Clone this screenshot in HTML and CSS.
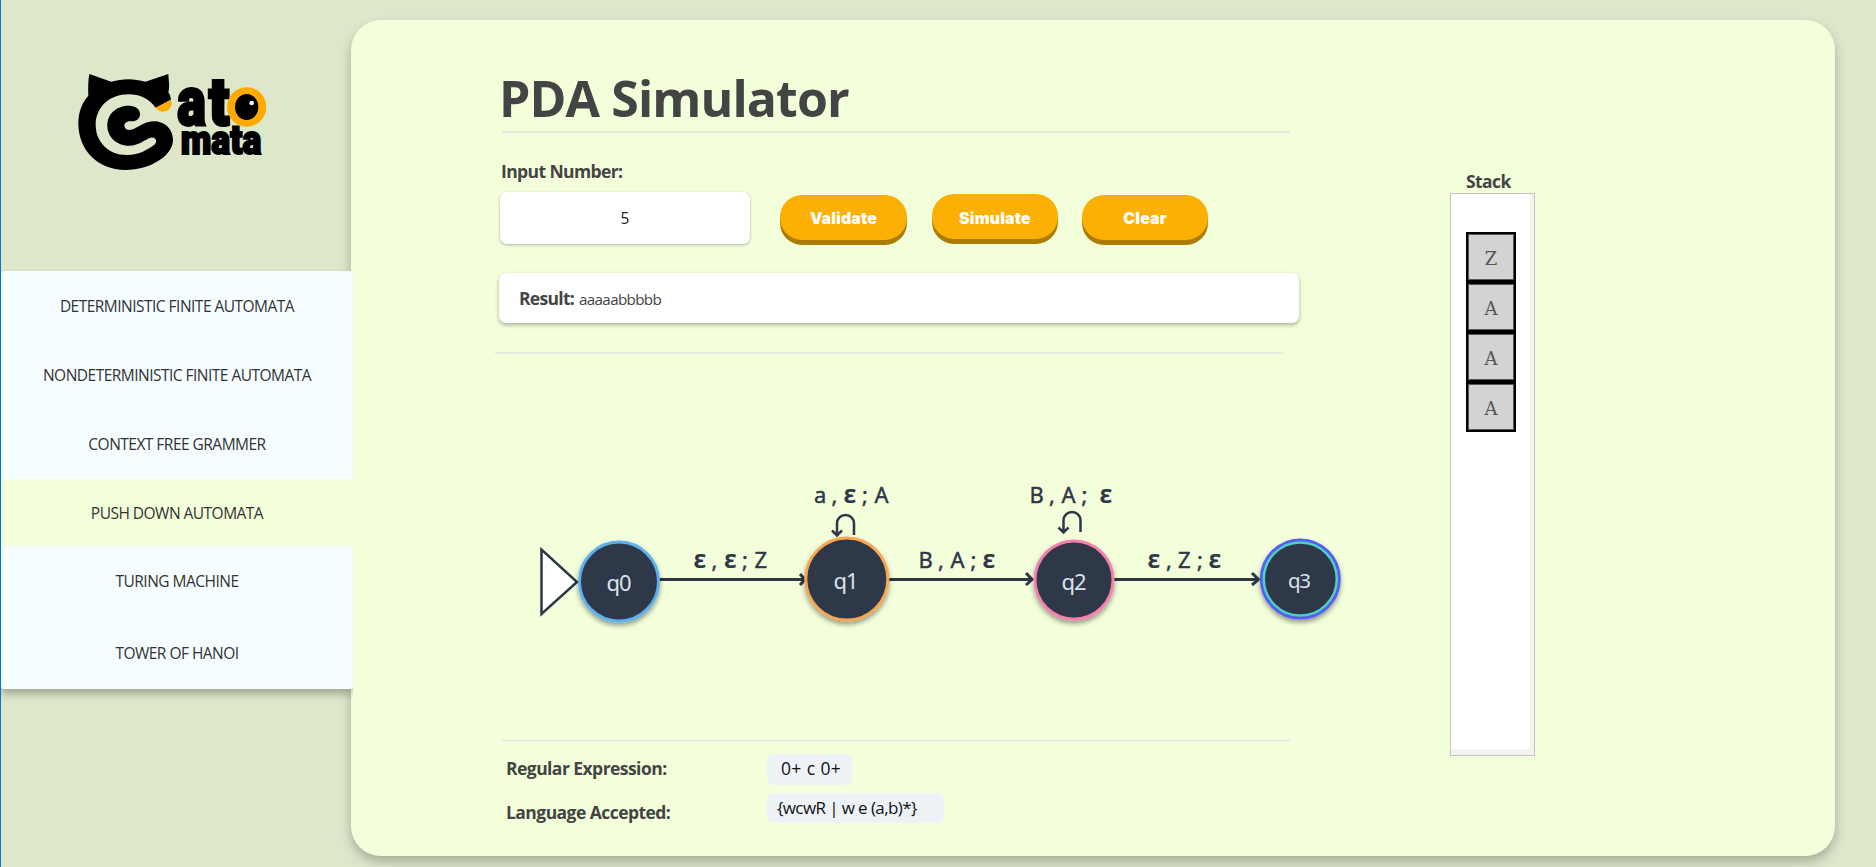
FILE: index.html
```html
<!DOCTYPE html>
<html lang="en">
<head>
<meta charset="utf-8">
<title>PDA Simulator</title>
<link rel="stylesheet" href="styles.css">
</head>
<body>
<aside class="sidebar">
  <svg class="logo" width="220" height="120" viewBox="0 0 660 360">
    <path d="M88 42L154 65C188 55 222 55 256 65L325 42C326 62 330 80 325 97C329 103 332 110 333 119L287 143C265 115 240 103 205 103C150 103 107 140 107 195C107 245 145 285 200 285C235 285 262 270 283 254C294 245 287 229 272 233C255 238 235 257 207 257C170 257 142 230 142 197C142 160 170 137 207 137C228 137 240 148 240 162C240 176 230 184 215 184C200 182 193 190 193 197C194 210 210 214 225 205C245 195 260 184 281 184C315 184 339 208 339 240C339 287 270 330 197 330C110 330 55 268 55 190C55 155 68 125 85 107Q83 70 88 42Z"/>
    <path d="M333 119A26 26 0 0 1 287 143Z" fill="#ffaa00"/>
    <text class="logo-text" x="352" y="196" font-size="206" textLength="86" lengthAdjust="spacingAndGlyphs">a</text>
    <text class="logo-text" x="446" y="196" font-size="198" textLength="62" lengthAdjust="spacingAndGlyphs">t</text>
    <text class="logo-text small" x="362" y="282" font-size="124" textLength="242" lengthAdjust="spacingAndGlyphs">mata</text>
    <circle cx="560" cy="141" r="59" fill="#ffaa00"/>
    <ellipse cx="560" cy="141" rx="35" ry="39"/>
    <circle cx="575" cy="129" r="7" fill="#fff"/>
  </svg>
  <nav class="menu">
    <a class="item first">DETERMINISTIC FINITE AUTOMATA</a>
    <a class="item second">NONDETERMINISTIC FINITE AUTOMATA</a>
    <a class="item third">CONTEXT FREE GRAMMER</a>
    <a class="item active">PUSH DOWN AUTOMATA</a>
    <a class="item fifth">TURING MACHINE</a>
    <a class="item last">TOWER OF HANOI</a>
  </nav>
</aside>
<main class="panel">
  <section class="work">
    <h1 class="title">PDA Simulator</h1>
    <div class="rule heading-rule"></div>
    <label class="label">Input Number:</label>
    <div class="controls">
      <div class="input">5</div>
      <button class="btn validate">Validate</button>
      <button class="btn simulate">Simulate</button>
      <button class="btn clear">Clear</button>
    </div>
    <div class="result"><b class="result-label">Result:</b><span class="result-text">aaaaabbbbb</span></div>
    <div class="rule result-rule"></div>
    <svg class="diagram" width="853" height="386" viewBox="495 354 853 386">
      <defs>
        <filter id="shadow" x="-20%" y="-20%" width="140%" height="150%">
          <feDropShadow dx="0" dy="3" stdDeviation="2.5" flood-color="#000" flood-opacity=".4"/>
        </filter>
      </defs>
      <path d="M541.5 549.5V614L577 582Z" class="start"/>
      <g class="edge">
        <path d="M659 579.5H803M800 574L805 579.5L800 585"/>
        <path d="M888 579.5H1031M1026 573L1032 579.5L1026 585"/>
        <path d="M1114 579.5H1258M1252 573L1258.500 579.500L1252 585"/>
        <path d="M854 535V523.500A8.500 8.500 0 0 0 837 523.500V535M832 530.500L837 535.500L842 530.500" class="loop"/>
        <path d="M1080.500 532V520.500A8.500 8.500 0 0 0 1063.500 520.500V532M1058.500 527.500L1063.500 532.500L1068.500 527.500" class="loop"/>
      </g>
      <g class="state" filter="url(#shadow)">
        <circle cx="619" cy="581.500" r="39.500" stroke="#5eb0ee"/>
        <circle cx="846.800" cy="579" r="41" stroke="#f6a750"/>
        <circle cx="1074" cy="580" r="39" stroke="#f680ac"/>
        <circle cx="1300.300" cy="579" r="39" stroke="#555df5"/>
      </g>
      <circle cx="1300.300" cy="579" r="36.500" fill="none" stroke="#4fd0c6" stroke-width="2.500"/>
      <g class="state-name">
        <text x="619" y="590.500" textLength="25">q0</text>
        <text x="846" y="588.500" textLength="25">q1</text>
        <text x="1074" y="589.500" textLength="25">q2</text>
        <text x="1299.500" y="587.500" textLength="23" class="last-state">q3</text>
      </g>
      <g class="edge-label">
        <text y="567.500"><tspan x="693.500" class="eps">ε</tspan><tspan x="711.500">,</tspan><tspan x="724" class="eps">ε</tspan><tspan x="742">;</tspan><tspan x="754.500">Z</tspan></text>
        <text y="502.500"><tspan x="814">a</tspan><tspan x="831.500">,</tspan><tspan x="843.500" class="eps">ε</tspan><tspan x="862">;</tspan><tspan x="874.500">A</tspan></text>
        <text y="567.500"><tspan x="918.500">B</tspan><tspan x="938">,</tspan><tspan x="950.500">A</tspan><tspan x="970.500">;</tspan><tspan x="982.500" class="eps">ε</tspan></text>
        <text y="502.500"><tspan x="1029.500">B</tspan><tspan x="1049">,</tspan><tspan x="1061.500">A</tspan><tspan x="1081.500">;</tspan><tspan x="1099.500" class="eps">ε</tspan></text>
        <text y="567.500"><tspan x="1147.500" class="eps">ε</tspan><tspan x="1166">,</tspan><tspan x="1178">Z</tspan><tspan x="1197">;</tspan><tspan x="1208.500" class="eps">ε</tspan></text>
      </g>
    </svg>
    <div class="rule info-rule"></div>
    <div class="info regex"><b class="info-label regex-label">Regular Expression:</b><span class="chip regex-chip">0+ c 0+</span></div>
    <div class="info lang"><b class="info-label lang-label">Language Accepted:</b><span class="chip lang-chip">{wcwR | w e (a,b)*}</span></div>
  </section>
  <section class="stack">
    <b class="stack-title">Stack</b>
    <div class="stack-box">
      <div class="cell">Z</div>
      <div class="cell">A</div>
      <div class="cell">A</div>
      <div class="cell">A</div>
    </div>
  </section>
</main>
</body>
</html>
```

FILE: styles.css
```css
* { box-sizing: border-box; }
body {
  margin: 0;
  width: 1876px;
  height: 867px;
  overflow: hidden;
  display: flex;
  background: #dde8cb;
  color: #444;
  font-family: "Open Sans", "Noto Sans", sans-serif;
}
.sidebar {
  width: 351px;
  flex: none;
  display: flex;
  flex-direction: column;
  border-left: 1px solid #0078d7;
  position: relative;
  z-index: 2;
}
.logo { display: block; margin: 60px 0 91px 59px; }
.logo-text { font-family: Roboto, sans-serif; font-weight: 900; stroke: #000; stroke-width: 9; }
.logo-text.small { stroke-width: 6; }
.menu {
  width: 352px;
  height: 418px;
  display: flex;
  flex-direction: column;
  background: #f5fdff;
  border-radius: 3px;
  box-shadow: 0 5px 9px rgba(0, 0, 0, .28);
  clip-path: inset(-2px 0 -20px 0);
}
.item {
  display: flex;
  align-items: center;
  justify-content: center;
  font-size: 15.5px;
  letter-spacing: -.52px;
  color: #333;
}
.first { height: 70px; }
.second { height: 69px; padding-bottom: 1px; }
.third { height: 69px; padding-bottom: 2px; }
.active { height: 67px; padding-top: 1px; background: #f3ffdb; }
.fifth { height: 71px; padding-bottom: 1px; }
.last { height: 72px; padding-bottom: 1px; }
.panel {
  flex: none;
  width: 1484px;
  height: 836px;
  margin-top: 20px;
  padding: 48px 0 0 144px;
  display: flex;
  background: #f3ffdb;
  border-radius: 30px;
  box-shadow: 0 6px 12px rgba(0, 0, 0, .25);
}
.work { width: 853px; flex: none; }
.title { margin: 0 0 0 4px; font-size: 50px; line-height: 60px; letter-spacing: -.9px; }
.rule { background: #e6e9df; height: 2px; }
.heading-rule { margin: 3px 0 26px 7px; width: 788px; }
.label { display: block; margin-left: 6px; font-size: 17.5px; font-weight: 700; line-height: 24px; letter-spacing: -.6px; }
.controls { display: flex; align-items: flex-start; height: 52px; margin: 9px 0 29px 5px; }
.input {
  width: 250px;
  height: 52px;
  background: #fff;
  border-radius: 7px;
  box-shadow: 0 1px 3px rgba(0, 0, 0, .3);
  font-size: 15.5px;
  line-height: 52px;
  text-align: center;
  color: #222;
}
.btn {
  border: 0;
  padding: 0;
  height: 45px;
  width: 126px;
  border-radius: 22px;
  background: #fbb003;
  box-shadow: 0 5px 0 #ac7c02;
  color: #fff;
  font: 900 15.8px/48px Inter, sans-serif;
  letter-spacing: .2px;
}
.validate { width: 127px; margin: 3px 0 0 30px; }
.simulate { margin: 2px 0 0 25px; line-height: 50px; }
.clear { margin: 3px 0 0 24px; }
.result {
  display: flex;
  align-items: baseline;
  width: 800px;
  height: 50px;
  margin-left: 4px;
  padding-left: 20px;
  background: #fff;
  border-radius: 7px;
  box-shadow: 0 2px 4px rgba(0, 0, 0, .3);
  line-height: 50px;
}
.result-label { font-size: 17.5px; letter-spacing: -.7px; width: 60px; }
.result-text { font-size: 15.2px; letter-spacing: -.65px; }
.result-rule { width: 788px; margin-top: 29px; }
.diagram { display: block; }
.start { fill: #fff; stroke: #2d3748; stroke-width: 2.5; }
.edge { fill: none; stroke: #2d3748; stroke-width: 3; }
.edge .loop { stroke-width: 2.5; }
.state { fill: #2d3748; stroke-width: 3; }
.state-name { font-family: "Noto Sans", sans-serif; font-size: 22px; fill: #dbe2ec; text-anchor: middle; }
.last-state { font-size: 20.5px; }
.edge-label { font-family: "Noto Sans", sans-serif; font-size: 22px; fill: #2d3748; stroke: #2d3748; stroke-width: .45px; }
.eps { font-size: 26px; font-weight: 600; stroke-width: .2px; }
.info-rule { height: 1px; width: 788px; margin-left: 7px; background: #dedde3; }
.info { display: flex; align-items: flex-start; padding-left: 11px; }
.info-label { width: 261px; font-size: 17.5px; letter-spacing: -.55px; }
.chip { background: #edf2f7; border-radius: 7px; color: #111; white-space: pre; }
.regex { margin-top: 13px; height: 31px; }
.regex-label { line-height: 29px; }
.regex-chip { width: 85px; height: 31px; line-height: 29px; padding-left: 14px; font-size: 17.5px; letter-spacing: .2px; word-spacing: .5px; }
.lang { margin-top: 8px; height: 30px; }
.lang-label { line-height: 38px; }
.lang-chip { width: 177px; height: 30px; line-height: 30px; padding-left: 10px; font-size: 17px; letter-spacing: -.6px; }
.stack { width: 86px; margin: 101px 0 0 102px; }
.stack-title { display: block; height: 24px; line-height: 25px; padding-left: 16px; font-size: 17.5px; letter-spacing: -.6px; }
.stack-box {
  width: 85px;
  height: 563px;
  padding: 38px 0 0 15px;
  background: #fff;
  border: 1px solid #c3c6c0;
  box-shadow: inset -4px -6px 0 #f3f3f3;
}
.cell {
  width: 50px;
  height: 50px;
  border: 2px solid #000;
  background: #d3d3d3;
  box-shadow: inset 0 0 0 1px #555;
  font: 18px/49px "DejaVu Serif", serif;
  text-align: center;
  color: #555;
}
```
